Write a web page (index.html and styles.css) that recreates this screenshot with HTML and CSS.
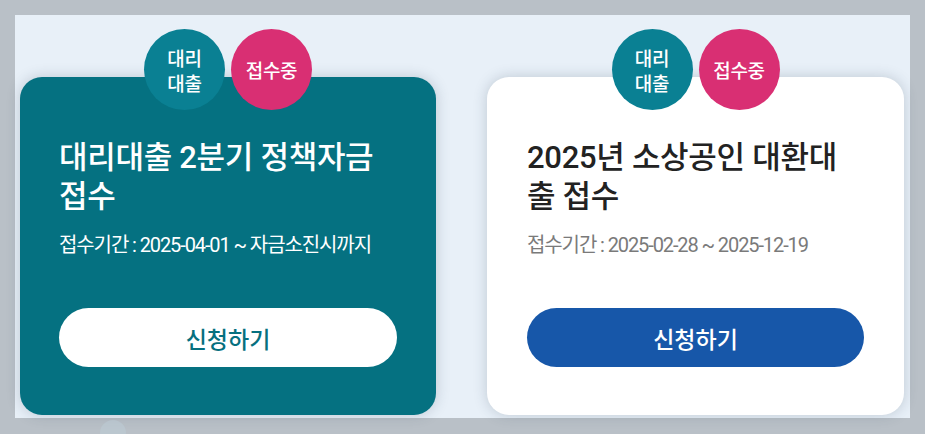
FILE: index.html
```html
<!DOCTYPE html>
<html lang="ko">
<head>
<meta charset="utf-8">
<title>정책자금 접수</title>
<link rel="stylesheet" href="styles.css">
</head>
<body>
<div class="panel">
  <div class="cards">
    <div class="card card-teal">
      <div class="badges">
        <span class="badge badge-teal">대리<br>대출</span>
        <span class="badge badge-pink">접수중</span>
      </div>
      <h2 class="title">대리대출 2분기 정책자금 접수</h2>
      <p class="period">접수기간 : 2025-04-01 ~ 자금소진시까지</p>
      <a class="btn btn-white">신청하기</a>
    </div>
    <div class="card card-white">
      <div class="badges">
        <span class="badge badge-teal">대리<br>대출</span>
        <span class="badge badge-pink">접수중</span>
      </div>
      <h2 class="title">2025년 소상공인 대환대출 접수</h2>
      <p class="period">접수기간 : 2025-02-28 ~ 2025-12-19</p>
      <a class="btn btn-blue">신청하기</a>
    </div>
  </div>
</div>
<div class="deco"></div>
</body>
</html>
```

FILE: styles.css
```css
html, body {
  margin: 0;
  padding: 0;
  background: #b9c0c7;
  font-family: Roboto, "Noto Sans CJK KR", sans-serif;
  overflow: hidden;
}
body {
  position: relative;
  height: 434px;
}
.panel {
  margin: 15px 15px 0 15px;
  height: 403px;
  background: #e8f0f8;
  box-sizing: border-box;
  padding: 62px 6px 0 5px;
}
.cards {
  display: grid;
  grid-template-columns: 416px 417px;
  column-gap: 51px;
}
.card {
  position: relative;
  height: 338px;
  box-sizing: border-box;
  border-radius: 22px;
  padding: 61px 39px 48px 39px;
  display: flex;
  flex-direction: column;
  box-shadow: 0 0 14px rgba(40, 60, 80, 0.22);
}
.card-teal { background: #057181; }
.card-white { background: #ffffff; padding-left: 40px; padding-right: 40px; }
.badges {
  position: absolute;
  left: 0;
  right: 0;
  top: -48px;
  display: flex;
  justify-content: center;
  gap: 6px;
}
.badge {
  width: 81px;
  height: 81px;
  border-radius: 50%;
  display: flex;
  align-items: center;
  justify-content: center;
  text-align: center;
  color: #ffffff;
  font-family: "Noto Sans CJK KR", sans-serif;
  font-size: 19px;
  line-height: 25px;
  font-weight: 500;
  letter-spacing: -0.3px;
}
.badge-teal { background: #0a8093; }
.badge-pink { background: #d92f73; }
.title {
  margin: 0;
  font-size: 31px;
  line-height: 39px;
  font-weight: 500;
  letter-spacing: -0.3px;
  word-break: break-all;
}
.card-teal .title { color: #ffffff; }
.card-white .title { color: #222222; }
.period {
  margin: 16px 0 0 0;
  font-size: 20px;
  line-height: 26px;
  letter-spacing: -1.1px;
  font-weight: 400;
}
.card-teal .period { color: #ffffff; }
.card-white .period { color: #7a7a7a; }
.btn {
  margin-top: auto;
  height: 59px;
  border-radius: 30px;
  display: flex;
  align-items: center;
  justify-content: center;
  font-family: "Noto Sans CJK KR", sans-serif;
  font-size: 23px;
  font-weight: 500;
  text-decoration: none;
}
.btn-white { background: #ffffff; color: #06707f; }
.btn-blue { background: #1757a9; color: #ffffff; }
.deco {
  position: absolute;
  left: 100px;
  top: 420px;
  width: 26px;
  height: 26px;
  border-radius: 50%;
  background: rgba(190, 205, 215, 0.5);
}
```
